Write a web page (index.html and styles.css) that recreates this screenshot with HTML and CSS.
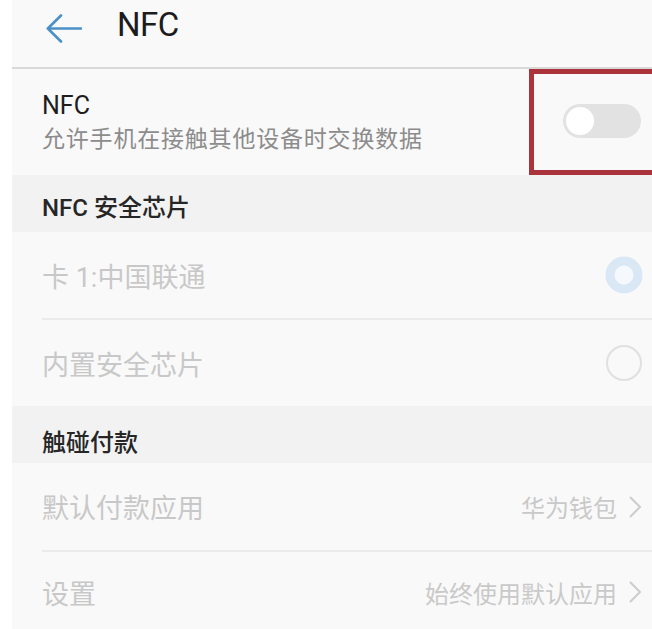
FILE: index.html
```html
<!DOCTYPE html>
<html lang="zh-CN">
<head>
<meta charset="utf-8">
<title>NFC</title>
<link rel="stylesheet" href="styles.css">
</head>
<body>
<div class="screen">
  <header class="topbar">
    <svg class="back" width="36" height="30" viewBox="0 0 36 30" aria-hidden="true">
      <path d="M15 1.5 L1.8 14.5 L15 27.5 M1.8 14.5 H35" fill="none" stroke="#4a90c9" stroke-width="2.6" stroke-linecap="round" stroke-linejoin="round"/>
    </svg>
    <h1 class="title">NFC</h1>
  </header>

  <div class="nfc-row">
    <div class="nfc-text">
      <div class="nfc-label">NFC</div>
      <div class="nfc-desc">允许手机在接触其他设备时交换数据</div>
    </div>
    <div class="switch"><span class="knob"></span></div>
  </div>

  <div class="section">NFC 安全芯片</div>
  <div class="group">
    <div class="item item-sep">
      <span class="item-label">卡 1:中国联通</span>
      <svg class="radio" width="38" height="38" viewBox="0 0 38 38" aria-hidden="true">
        <circle cx="19" cy="19" r="14" fill="#f5f8fc" stroke="#dae8f6" stroke-width="9"/>
      </svg>
    </div>
    <div class="item">
      <span class="item-label">内置安全芯片</span>
      <svg class="radio" width="38" height="38" viewBox="0 0 38 38" aria-hidden="true">
        <circle cx="19" cy="19" r="17" fill="none" stroke="#e0e0e0" stroke-width="2"/>
      </svg>
    </div>
  </div>

  <div class="section section-2">触碰付款</div>
  <div class="group">
    <div class="item item-sep item-pay">
      <span class="item-label">默认付款应用</span>
      <span class="value">华为钱包
        <svg class="chev" width="14" height="24" viewBox="0 0 14 24" aria-hidden="true"><path d="M2 2 L12 12 L2 22" fill="none" stroke="#cccccc" stroke-width="2"/></svg>
      </span>
    </div>
    <div class="item item-last">
      <span class="item-label">设置</span>
      <span class="value">始终使用默认应用
        <svg class="chev" width="14" height="24" viewBox="0 0 14 24" aria-hidden="true"><path d="M2 2 L12 12 L2 22" fill="none" stroke="#cccccc" stroke-width="2"/></svg>
      </span>
    </div>
  </div>

  <div class="highlight"></div>
</div>
</body>
</html>
```

FILE: styles.css
```css
html, body {
  margin: 0;
  padding: 0;
  background: #ffffff;
}

body {
  font-family: Roboto, "Noto Sans CJK SC", "Noto Sans", sans-serif;
}

.screen {
  position: relative;
  margin-left: 12px;
  height: 629px;
  overflow: hidden;
  background: #f9f9f9;
}

.topbar {
  height: 67px;
  display: flex;
  align-items: flex-start;
  padding-left: 34px;
  border-bottom: 2px solid #d9d9d9;
  box-sizing: content-box;
}

.back {
  display: block;
  margin-top: 14px;
}

.title {
  margin: 5px 0 0 35px;
  font-size: 33px;
  font-weight: 400;
  color: #1c1c1c;
  line-height: 40px;
  letter-spacing: -0.5px;
}

.nfc-row {
  height: 106px;
  display: flex;
  align-items: center;
  justify-content: space-between;
  padding: 0 11px 0 30px;
}

.nfc-text {
  display: flex;
  flex-direction: column;
  gap: 4px;
  margin-top: 2px;
}

.nfc-label {
  font-size: 25px;
  color: #1e1e1e;
  line-height: 30px;
}

.nfc-desc {
  font-size: 23px;
  color: #8c8c8c;
  line-height: 30px;
  letter-spacing: 0.8px;
}

.switch {
  position: relative;
  width: 78px;
  height: 34px;
  border-radius: 17px;
  background: #e2e2e2;
  margin-top: -2px;
}

.knob {
  position: absolute;
  left: 3px;
  top: 3px;
  width: 28px;
  height: 28px;
  border-radius: 50%;
  background: #ffffff;
}

.section {
  height: 57px;
  display: flex;
  align-items: center;
  padding-left: 30px;
  padding-top: 3px;
  box-sizing: border-box;
  background: #f2f2f2;
  font-size: 24px;
  font-weight: 500;
  color: #262626;
}

.section-2 {
  padding-top: 12px;
}

.group {
  margin-left: 30px;
}

.item {
  height: 86px;
  display: flex;
  align-items: center;
  justify-content: space-between;
  padding-right: 10px;
}

.item-sep {
  border-bottom: 2px solid #ebebeb;
}

.item-pay {
  height: 87px;
}

.item-last {
  height: 80px;
}

.item-label {
  font-size: 27px;
  color: #c8c8c8;
}

.radio {
  display: block;
  margin-right: -1px;
}

.value {
  display: flex;
  align-items: center;
  gap: 11px;
  font-size: 24px;
  color: #c9c9c9;
}

.chev {
  display: block;
}

.highlight {
  position: absolute;
  left: 517px;
  top: 69px;
  width: 140px;
  height: 106px;
  box-sizing: border-box;
  border: 5px solid #ab343c;
}
```
